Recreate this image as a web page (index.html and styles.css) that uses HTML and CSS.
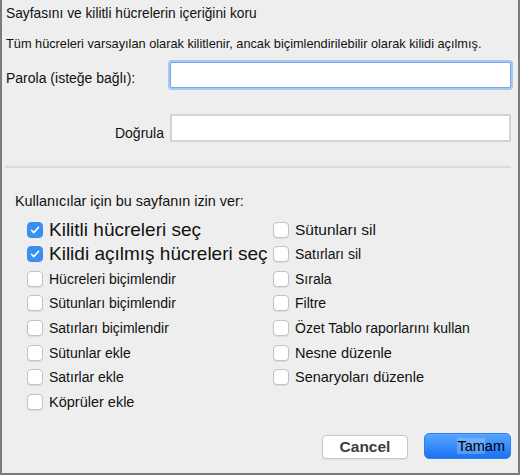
FILE: index.html
```html
<!DOCTYPE html>
<html lang="tr">
<head>
  <meta charset="UTF-8" />
  <title>Sayfayı koru</title>
  <meta name="viewport" content="width=device-width, initial-scale=1.0"/>
  <link rel="stylesheet" href="styles.css">
</head>
<body>
  <div class="dialog">
    <!-- başlık + açıklama -->
    <div class="title">Sayfasını ve kilitli hücrelerin içeriğini koru</div>
    <div class="note">Tüm hücreleri varsayılan olarak kilitlenir, ancak biçimlendirilebilir olarak kilidi açılmış.</div>

    <!-- parola alanları -->
    <div class="field field-password">
      <div class="field-label">Parola (isteğe bağlı):</div>
      <div class="text-input focused"></div>
    </div>
    <div class="field field-confirm">
      <div class="field-label">Doğrula</div>
      <div class="text-input"></div>
    </div>

    <hr class="divider"/>

    <!-- izinler -->
    <div class="perm-title">Kullanıcılar için bu sayfanın izin ver:</div>
    <div class="perm-grid">
      <div class="perm-col perm-col-left">
        <div class="perm">
          <span class="box checked"><svg viewBox="0 0 16 16"><path d="M4 8.3l2.6 2.7L12 5" fill="none" stroke="#fff" stroke-width="1.8" stroke-linecap="round" stroke-linejoin="round"/></svg></span>
          <span class="perm-text big">Kilitli hücreleri seç</span>
        </div>
        <div class="perm">
          <span class="box checked"><svg viewBox="0 0 16 16"><path d="M4 8.3l2.6 2.7L12 5" fill="none" stroke="#fff" stroke-width="1.8" stroke-linecap="round" stroke-linejoin="round"/></svg></span>
          <span class="perm-text big">Kilidi açılmış hücreleri seç</span>
        </div>
        <div class="perm"><span class="box"></span><span class="perm-text">Hücreleri biçimlendir</span></div>
        <div class="perm"><span class="box"></span><span class="perm-text">Sütunları biçimlendir</span></div>
        <div class="perm"><span class="box"></span><span class="perm-text">Satırları biçimlendir</span></div>
        <div class="perm"><span class="box"></span><span class="perm-text">Sütunlar ekle</span></div>
        <div class="perm"><span class="box"></span><span class="perm-text">Satırlar ekle</span></div>
        <div class="perm"><span class="box"></span><span class="perm-text wide">Köprüler ekle</span></div>
      </div>
      <div class="perm-col">
        <div class="perm"><span class="box"></span><span class="perm-text larger">Sütunları sil</span></div>
        <div class="perm"><span class="box"></span><span class="perm-text">Satırları sil</span></div>
        <div class="perm"><span class="box"></span><span class="perm-text">Sırala</span></div>
        <div class="perm"><span class="box"></span><span class="perm-text">Filtre</span></div>
        <div class="perm"><span class="box"></span><span class="perm-text">Özet Tablo raporlarını kullan</span></div>
        <div class="perm"><span class="box"></span><span class="perm-text wide">Nesne düzenle</span></div>
        <div class="perm"><span class="box"></span><span class="perm-text wide">Senaryoları düzenle</span></div>
      </div>
    </div>

    <!-- butonlar -->
    <div class="actions">
      <button class="btn btn-cancel">Cancel</button>
      <button class="btn btn-ok"><span class="sel">Tam</span>am</button>
    </div>
  </div>
</body>
</html>
```

FILE: styles.css
```css
/* genel */
body {
  margin: 0;
  padding: 0;
  background: #eeeeee;
  font-family: "Liberation Sans", Arial, sans-serif;
  color: #111;
}

.dialog {
  width: 520px;
  height: 475px;
  box-sizing: border-box;
  background: #eeeeee;
  border-left: 2px solid #7b7b7b;
  border-right: 2px solid #7b7b7b;
  border-bottom: 2px solid #7b7b7b;
  overflow: hidden;
}

/* başlık */
.title {
  height: 28px;
  line-height: 28px;
  padding-left: 4px;
  font-size: 13.75px;
  white-space: nowrap;
}
.note {
  height: 32px;
  line-height: 32px;
  padding-left: 4px;
  font-size: 12.75px;
  white-space: nowrap;
}

/* parola alanları */
.field {
  display: flex;
  align-items: flex-start;
  padding-left: 4px;
}
.field-label {
  width: 164px;
  box-sizing: border-box;
  font-size: 14px;
  white-space: nowrap;
}
.text-input {
  width: 341px;
  box-sizing: border-box;
  background: #fff;
}

.field-password {
  height: 30px;
}
.field-password .field-label {
  line-height: 30px;
  margin-top: 3px;
}
.field-password .text-input {
  margin-top: 2px;
  height: 26px;
}
.text-input.focused {
  border: 1px solid #78a6e8;
  border-radius: 2px;
  box-shadow: 0 0 0 2px #a8c8f2;
}

.field-confirm {
  margin-top: 24px;
  height: 28px;
}
.field-confirm .field-label {
  line-height: 28px;
  margin-top: 5px;
  text-align: right;
  padding-right: 6px;
}
.field-confirm .text-input {
  height: 28px;
  border: 2px solid #d3d3d3;
}

.divider {
  margin: 24px 0 0 3px;
  width: 506px;
  height: 2px;
  border: none;
  background: #dadada;
}

/* izinler */
.perm-title {
  margin-top: 18px;
  line-height: 30px;
  padding-left: 13px;
  font-size: 14.4px;
  white-space: nowrap;
}
.perm-grid {
  display: flex;
  margin-top: 1.5px;
  padding-left: 25px;
}
.perm-col-left {
  width: 246px;
}
.perm {
  display: flex;
  align-items: center;
  gap: 6px;
  height: 24.57px;
  white-space: nowrap;
}
.box {
  flex: none;
  width: 16px;
  height: 16px;
  box-sizing: border-box;
  background: #fff;
  border: 1px solid #c3c3c3;
  border-radius: 4px;
  box-shadow: 0 1px 1px rgba(0, 0, 0, 0.08);
}
.box.checked {
  background: #3a8ef2;
  border-color: #3a8ef2;
  box-shadow: none;
}
.box svg {
  display: block;
  width: 14px;
  height: 14px;
}
.perm-text {
  font-size: 14px;
}
.perm-text.big {
  font-size: 19px;
}
.perm-text.larger {
  font-size: 15.5px;
}
.perm-text.wide {
  font-size: 14.5px;
}

/* butonlar */
.actions {
  display: flex;
  justify-content: flex-end;
  align-items: flex-end;
  gap: 16px;
  margin-top: 19px;
  padding-right: 7px;
}
.btn {
  font-family: "Liberation Sans", Arial, sans-serif;
  box-sizing: border-box;
  padding: 0;
  cursor: pointer;
}
.btn-cancel {
  width: 86px;
  height: 24px;
  background: #fff;
  border: 1px solid #c6c6c6;
  border-radius: 4px;
  font-size: 15.5px;
  font-weight: bold;
  color: #3d3d3d;
  box-shadow: 0 1px 1px rgba(0, 0, 0, 0.06);
}
.btn-ok {
  width: 87px;
  height: 26px;
  background: linear-gradient(#58a6ff, #1b72f3);
  border: 1px solid #2c7ff0;
  border-radius: 5px;
  font-size: 14.5px;
  color: #000;
  text-align: right;
  padding-right: 5px;
}
.sel {
  background: rgba(255, 255, 255, 0.22);
}
```
